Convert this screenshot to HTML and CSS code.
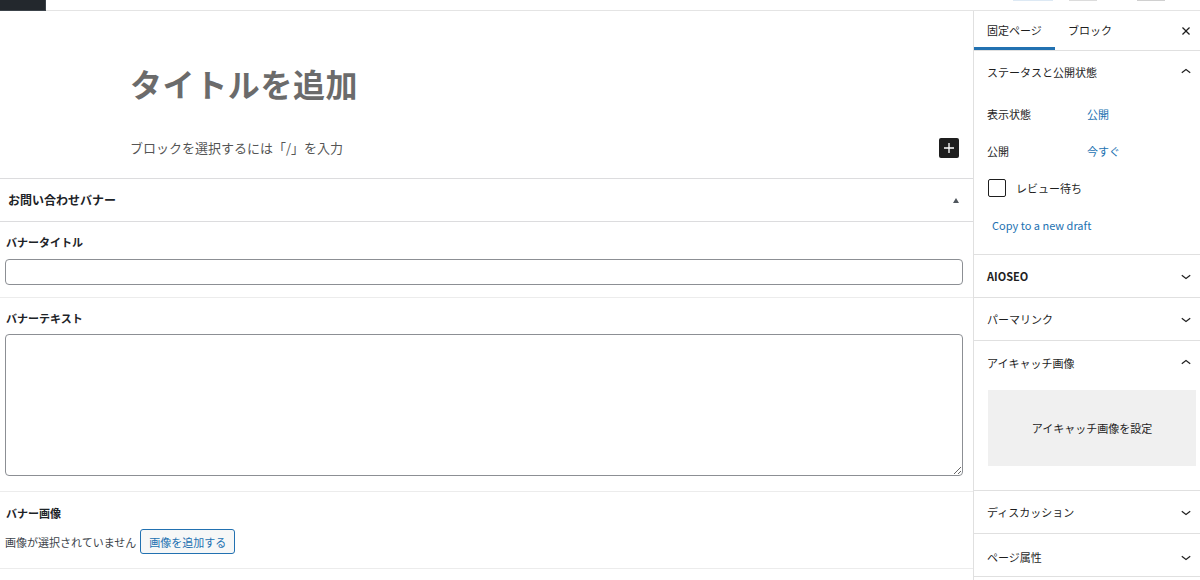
FILE: index.html
```html
<!DOCTYPE html>
<html lang="ja">
<head>
<meta charset="utf-8">
<title>固定ページを編集</title>
<link rel="stylesheet" href="styles.css">
</head>
<body>
<div class="app">
  <header class="topbar">
    <div class="logo"></div>
    <div class="topbar-fill">
      <span class="tb tb-blue"></span>
      <span class="tb tb-grey1"></span>
      <span class="tb tb-grey2"></span>
    </div>
  </header>
  <div class="workspace">
    <main class="editor">
      <div class="canvas">
        <h1 class="title">タイトルを追加</h1>
        <div class="appender">
          <p class="appender-text">ブロックを選択するには「/」を入力</p>
          <button class="plus" type="button" aria-label="ブロックを追加">
            <svg viewBox="0 0 24 24" width="20" height="20"><path d="M18 11.2h-5.2V6h-1.6v5.2H6v1.6h5.2V18h1.6v-5.2H18z" fill="#fff"/></svg>
          </button>
        </div>
      </div>
      <section class="metabox">
        <div class="metabox-head">
          <h2 class="metabox-title">お問い合わせバナー</h2>
          <span class="tri"></span>
        </div>
        <div class="field">
          <label class="field-label">バナータイトル</label>
          <input class="text-input" type="text">
        </div>
        <div class="field field-text">
          <label class="field-label">バナーテキスト</label>
          <textarea class="text-area"></textarea>
        </div>
        <div class="field field-image">
          <label class="field-label">バナー画像</label>
          <div class="image-row">
            <span class="image-note">画像が選択されていません</span>
            <button class="add-image" type="button">画像を追加する</button>
          </div>
        </div>
      </section>
    </main>
    <aside class="sidebar">
      <div class="tabs">
        <span class="tab tab-active">固定ページ</span>
        <span class="tab">ブロック</span>
        <span class="tabs-spacer"></span>
        <span class="close">
          <svg viewBox="0 0 24 24" width="20" height="20"><path d="M12 13.06l3.712 3.713 1.061-1.06L13.061 12l3.712-3.712-1.06-1.06L12 10.938 8.288 7.227l-1.061 1.06L10.939 12l-3.712 3.712 1.06 1.061L12 13.061z" fill="#1e1e1e"/></svg>
        </span>
      </div>

      <div class="panel">
        <div class="panel-head">
          <span class="panel-title">ステータスと公開状態</span>
          <svg class="chev" viewBox="0 0 24 24" width="20" height="20"><path d="M6.5 12.4L12 8l5.5 4.4-.9 1.2L12 10l-4.6 3.6z" fill="#1e1e1e"/></svg>
        </div>
        <div class="panel-body status-body">
          <div class="status-row"><span class="status-label">表示状態</span><a class="link">公開</a></div>
          <div class="status-row"><span class="status-label">公開</span><a class="link">今すぐ</a></div>
          <div class="status-row"><span class="checkbox"></span><span class="check-label">レビュー待ち</span></div>
          <div class="status-row"><a class="link copy-link">Copy to a new draft</a></div>
        </div>
      </div>

      <div class="panel">
        <div class="panel-head">
          <span class="panel-title panel-title-bold">AIOSEO</span>
          <svg class="chev" viewBox="0 0 24 24" width="20" height="20"><path d="M17.5 11.6L12 16l-5.5-4.4.9-1.2L12 14l4.6-3.6z" fill="#1e1e1e"/></svg>
        </div>
      </div>

      <div class="panel">
        <div class="panel-head">
          <span class="panel-title">パーマリンク</span>
          <svg class="chev" viewBox="0 0 24 24" width="20" height="20"><path d="M17.5 11.6L12 16l-5.5-4.4.9-1.2L12 14l4.6-3.6z" fill="#1e1e1e"/></svg>
        </div>
      </div>

      <div class="panel">
        <div class="panel-head panel-head-feat">
          <span class="panel-title">アイキャッチ画像</span>
          <svg class="chev" viewBox="0 0 24 24" width="20" height="20"><path d="M6.5 12.4L12 8l5.5 4.4-.9 1.2L12 10l-4.6 3.6z" fill="#1e1e1e"/></svg>
        </div>
        <div class="panel-body featured-body">
          <div class="featured-box">アイキャッチ画像を設定</div>
        </div>
      </div>

      <div class="panel">
        <div class="panel-head">
          <span class="panel-title">ディスカッション</span>
          <svg class="chev" viewBox="0 0 24 24" width="20" height="20"><path d="M17.5 11.6L12 16l-5.5-4.4.9-1.2L12 14l4.6-3.6z" fill="#1e1e1e"/></svg>
        </div>
      </div>

      <div class="panel">
        <div class="panel-head panel-head-last">
          <span class="panel-title">ページ属性</span>
          <svg class="chev" viewBox="0 0 24 24" width="20" height="20"><path d="M17.5 11.6L12 16l-5.5-4.4.9-1.2L12 14l4.6-3.6z" fill="#1e1e1e"/></svg>
        </div>
      </div>
    </aside>
  </div>
</div>
</body>
</html>
```

FILE: styles.css
```css
* { box-sizing: border-box; }

html, body {
  margin: 0;
  padding: 0;
  background: #fff;
}

body {
  font-family: "Noto Sans CJK JP", "Noto Sans", sans-serif;
  color: #1e1e1e;
  width: 1200px;
  height: 580px;
  overflow: hidden;
}

.app {
  display: flex;
  flex-direction: column;
  height: 580px;
}

/* top bar */
.topbar {
  display: flex;
  height: 11px;
  flex: none;
}

.logo {
  width: 46px;
  height: 11px;
  background: #23282d;
  border-right: 1px solid #3c434a;
  border-bottom: 1px solid #3c434a;
}

.topbar-fill {
  flex: 1;
  display: flex;
  justify-content: flex-end;
  align-items: flex-start;
  border-bottom: 1px solid #e4e4e4;
  padding-right: 35px;
}

.tb {
  display: block;
  height: 1px;
}

.tb-blue { width: 40px; background: #dde9f4; margin-right: 16px; }
.tb-grey1 { width: 28px; background: #dcdcdc; margin-right: 40px; }
.tb-grey2 { width: 28px; background: #d0d0d0; }

/* workspace */
.workspace {
  flex: 1;
  display: flex;
  min-height: 0;
}

.editor {
  width: 973px;
  flex: none;
  display: flex;
  flex-direction: column;
}

.canvas {
  padding: 52px 14px 20px 130px;
}

.title {
  margin: 0;
  font-size: 32px;
  line-height: 40px;
  font-weight: 700;
  color: #6b6b6b;
  letter-spacing: 0.6px;
}

.appender {
  margin-top: 35px;
  display: flex;
  align-items: center;
  justify-content: space-between;
  height: 20px;
}

.appender-text {
  margin: 0;
  font-size: 13px;
  line-height: 20px;
  color: #555;
}

.plus {
  width: 20px;
  height: 20px;
  padding: 0;
  border: none;
  border-radius: 2px;
  background: #1e1e1e;
  display: flex;
  align-items: center;
  justify-content: center;
}

/* metabox */
.metabox {
  border-top: 1px solid #dcdcde;
}

.metabox-head {
  height: 43px;
  display: flex;
  align-items: center;
  justify-content: space-between;
  padding: 0 14px 0 8px;
  border-bottom: 1px solid #dcdcde;
}

.metabox-title {
  margin: 0;
  font-size: 12px;
  line-height: 16px;
  font-weight: 700;
  color: #1d2327;
}

.tri {
  width: 0;
  height: 0;
  border-left: 3.5px solid transparent;
  border-right: 3.5px solid transparent;
  border-bottom: 5px solid #50575e;
}

.field {
  padding: 12px 10px 12px 5px;
  border-bottom: 1px solid #ececec;
  display: flex;
  flex-direction: column;
}

.field-text {
  padding-top: 12px;
  padding-bottom: 15px;
}

.field-image {
  padding-top: 13px;
  padding-bottom: 14px;
}

.field-label {
  display: block;
  font-size: 11px;
  line-height: 16px;
  font-weight: 700;
  color: #1d2327;
  padding-left: 1px;
  margin-bottom: 9px;
}

.field-text .field-label { margin-bottom: 8px; }
.field-image .field-label { margin-bottom: 8px; }

.text-input {
  display: block;
  width: 100%;
  height: 26px;
  border: 1px solid #8c8f94;
  border-radius: 4px;
  background: #fff;
  margin: 0;
}

.text-area {
  display: block;
  width: 100%;
  height: 142px;
  border: 1px solid #8c8f94;
  border-radius: 4px;
  background: #fff;
  margin: 0;
  resize: both;
}

.image-row {
  display: flex;
  align-items: center;
  gap: 4px;
}

.image-note {
  font-size: 11px;
  line-height: 16px;
  color: #3c434a;
}

.add-image {
  height: 25px;
  padding: 0 8px;
  border: 1px solid #2271b1;
  border-radius: 3px;
  background: #f6f7f7;
  color: #2271b1;
  font-family: "Noto Sans CJK JP", sans-serif;
  font-size: 11px;
  line-height: 22px;
}

/* sidebar */
.sidebar {
  flex: 1;
  border-left: 1px solid #e0e0e0;
  display: flex;
  flex-direction: column;
}

.tabs {
  height: 40px;
  display: flex;
  align-items: stretch;
  border-bottom: 1px solid #e0e0e0;
  flex: none;
}

.tab {
  display: flex;
  align-items: center;
  padding: 0 13px 0 13px;
  font-size: 11px;
  line-height: 16px;
  color: #1e1e1e;
  border-bottom: 3px solid transparent;
  padding-top: 1px;
}

.tab-active {
  border-bottom-color: #2271b1;
  width: 81px;
}

.tabs-spacer { flex: 1; }

.close {
  display: flex;
  align-items: center;
  padding-right: 4px;
}

.panel {
  border-bottom: 1px solid #e0e0e0;
  flex: none;
}

.panel-head {
  height: 42px;
  display: flex;
  align-items: center;
  justify-content: space-between;
  padding: 0 4px 0 13px;
}

.panel-head-feat {
  height: 43px;
  padding-top: 1px;
}

.panel-head-last {
  padding-top: 3px;
}

.panel-title {
  font-size: 11px;
  line-height: 16px;
  color: #1e1e1e;
}

.panel-title-bold { font-weight: 700; }

.chev { display: block; }

.status-body {
  padding: 2px 0 11px 13px;
}

.status-row {
  height: 37px;
  display: flex;
  align-items: center;
  font-size: 11px;
  line-height: 16px;
}

.status-label {
  width: 100px;
  color: #1e1e1e;
}

.link {
  color: #2271b1;
  text-decoration: none;
  font-size: 11px;
}

.copy-link {
  padding-left: 5px;
}

.checkbox {
  width: 18px;
  height: 18px;
  border: 1.5px solid #1e1e1e;
  border-radius: 2px;
  margin-right: 10px;
  margin-left: 1px;
}

.check-label { color: #1e1e1e; }

.featured-body {
  padding: 6px 4px 24px 14px;
}

.featured-box {
  height: 76px;
  background: #f0f0f0;
  display: flex;
  align-items: center;
  justify-content: center;
  font-size: 11px;
  line-height: 16px;
  color: #1e1e1e;
}
```
